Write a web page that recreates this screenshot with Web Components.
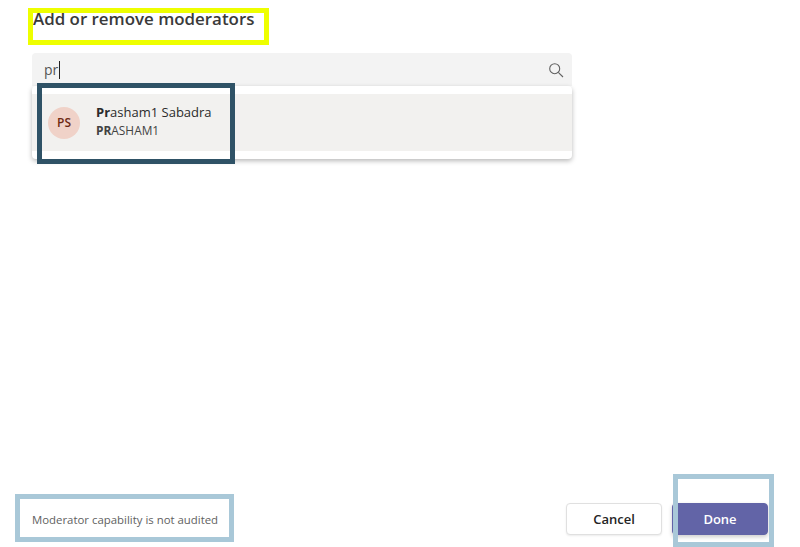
<!DOCTYPE html>
<html lang="en">
<head>
<meta charset="utf-8">
<title>Add or remove moderators</title>
<style>
  html, body { margin: 0; height: 100%; background: #fff; }
  body { font-family: "Open Sans", "Liberation Sans", sans-serif; color: #242424; overflow: hidden; }
</style>
</head>
<body>
<moderators-dialog>
  <span slot="title">Add or remove moderators</span>
  <people-search value="pr">
    <person-option initials="PS">
      <span slot="name"><b>Pr</b>asham1 Sabadra</span>
      <span slot="sub"><b>PR</b>ASHAM1</span>
    </person-option>
  </people-search>
  <span slot="note">Moderator capability is not audited</span>
  <action-button slot="actions">Cancel</action-button>
  <action-button slot="actions" primary>Done</action-button>
</moderators-dialog>
<note-box style="left:28px;top:8px;width:241px;height:37px;--box:#eeff00"></note-box>
<note-box style="left:37px;top:83px;width:198px;height:81px;--box:#2f5266"></note-box>
<note-box style="left:15px;top:494px;width:219px;height:48px;--box:#a9c8d8"></note-box>
<note-box style="left:673px;top:474px;width:101px;height:73px;--box:#a9c8d8"></note-box>

<script>
class ModeratorsDialog extends HTMLElement {
  constructor() {
    super();
    this.attachShadow({ mode: "open" });
    this.shadowRoot.innerHTML = `
      <style>
        :host { display: flex; flex-direction: column; height: 547px; box-sizing: border-box; padding: 8px 32px 12px 32px; }
        h2 { margin: 0 0 23px 1px; font-size: 16.9px; line-height: 22px; font-weight: 600; color: #3a3a3a; }
        main { flex: 1; }
        footer { display: flex; align-items: center; justify-content: space-between; }
        .note { font-size: 11.4px; color: #616161; }
        .actions { display: flex; gap: 10px; }
      </style>
      <h2><slot name="title"></slot></h2>
      <main><slot></slot></main>
      <footer>
        <div class="note"><slot name="note"></slot></div>
        <div class="actions"><slot name="actions"></slot></div>
      </footer>`;
  }
}

class PeopleSearch extends HTMLElement {
  constructor() {
    super();
    this.attachShadow({ mode: "open" });
    this.shadowRoot.innerHTML = `
      <style>
        :host { display: block; width: 540px; }
        .field { display: flex; align-items: center; justify-content: space-between; height: 33px; padding: 0 8px 0 12px; background: #f3f3f3; border-radius: 4px 4px 0 0; font-size: 14px; color: #555; }
        .value { display: inline-block; padding-right: 1px; border-right: 1px solid #222; line-height: 18px; }
        svg { display: block; }
        .list { padding: 8px 0; background: #fff; border-radius: 4px; box-shadow: 0 2px 5px rgba(0,0,0,.28); }
      </style>
      <div class="field">
        <span class="value"></span>
        <svg width="16" height="16" viewBox="0 0 16 16" fill="none" stroke="#616161" stroke-width="1.1">
          <circle cx="6.7" cy="6.7" r="5"/>
          <path d="M10.3 10.3 15 15"/>
        </svg>
      </div>
      <div class="list"><slot></slot></div>`;
    this.shadowRoot.querySelector(".value").textContent = this.getAttribute("value");
  }
}

class PersonOption extends HTMLElement {
  constructor() {
    super();
    this.attachShadow({ mode: "open" });
    this.shadowRoot.innerHTML = `
      <style>
        :host { display: flex; align-items: center; height: 57px; padding-left: 16px; background: #f2f1ef; }
        .avatar { flex: none; display: flex; align-items: center; justify-content: center; width: 32px; height: 32px; border-radius: 50%; background: #f0d2c8; color: #6e2a14; font-size: 12px; font-weight: 600; }
        .text { margin: -4px 0 0 16px; }
        .name { font-size: 13px; line-height: 18px; color: #2b2b2b; }
        .sub { font-size: 11.9px; line-height: 18px; color: #424242; }
        ::slotted(*) { white-space: nowrap; }
      </style>
      <div class="avatar"></div>
      <div class="text">
        <div class="name"><slot name="name"></slot></div>
        <div class="sub"><slot name="sub"></slot></div>
      </div>`;
    this.shadowRoot.querySelector(".avatar").textContent = this.getAttribute("initials");
  }
}

class ActionButton extends HTMLElement {
  constructor() {
    super();
    this.attachShadow({ mode: "open" });
    this.shadowRoot.innerHTML = `
      <style>
        :host { display: flex; align-items: center; justify-content: center; box-sizing: border-box; width: 96px; height: 32px; border-radius: 4px; border: 1px solid #e0e0e0; background: #fff; color: #242424; font-size: 13px; font-weight: 600; box-shadow: 0 1px 2px rgba(0,0,0,.08); }
        :host([primary]) { border-color: #6264a7; background: #6264a7; color: #fff; box-shadow: 0 2px 4px rgba(0,0,0,.2); }
      </style>
      <slot></slot>`;
  }
}

class NoteBox extends HTMLElement {
  constructor() {
    super();
    this.attachShadow({ mode: "open" });
    this.shadowRoot.innerHTML = `
      <style>
        :host { display: block; position: absolute; box-sizing: border-box; border: 5px solid var(--box); pointer-events: none; }
      </style>`;
  }
}

customElements.define("moderators-dialog", ModeratorsDialog);
customElements.define("people-search", PeopleSearch);
customElements.define("person-option", PersonOption);
customElements.define("action-button", ActionButton);
customElements.define("note-box", NoteBox);
</script>
</body>
</html>
